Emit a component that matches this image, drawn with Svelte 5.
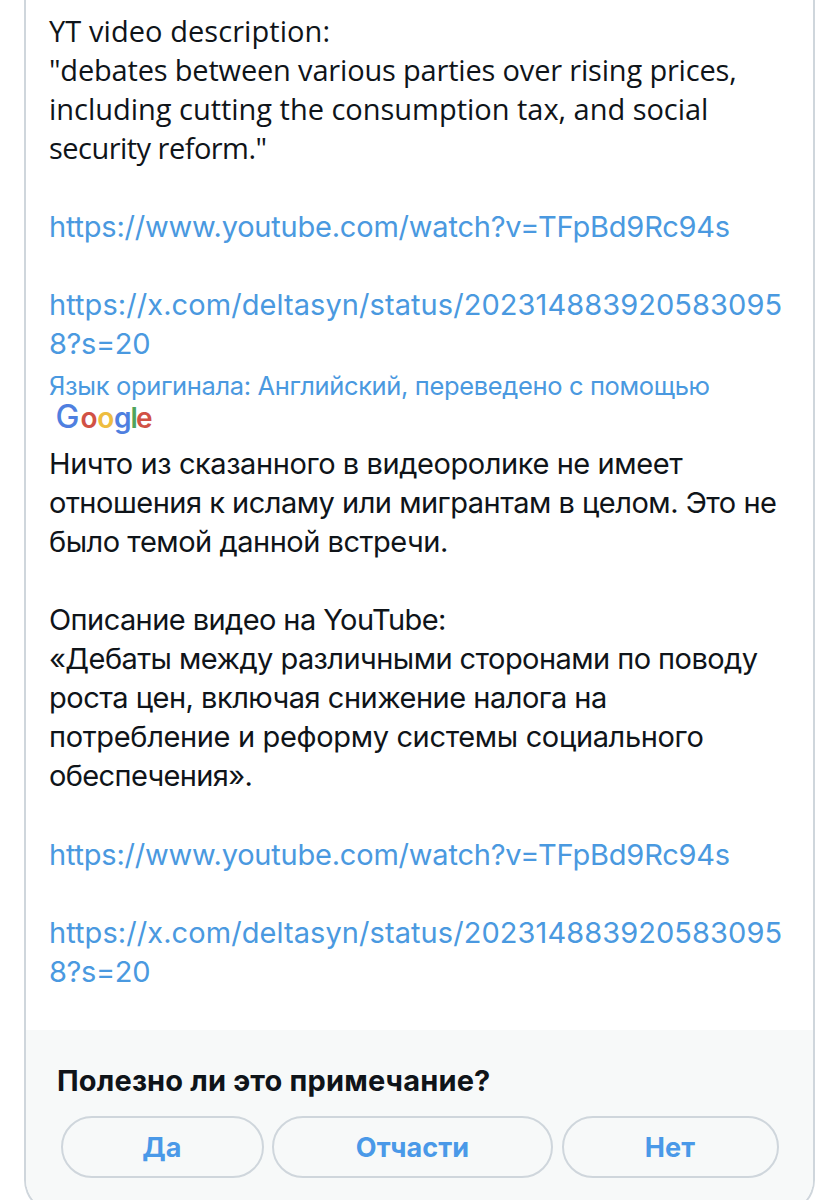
<script lang="ts">
  type Line = { text: string; spacing?: number; link?: boolean; latin?: boolean };

  const links: Line[] = [
    { text: '' },
    { text: 'https://www.youtube.com/watch?v=TFpBd9Rc94s', spacing: -0.21, link: true },
    { text: '' },
    { text: 'https://x.com/deltasyn/status/202314883920583095', spacing: 0.07, link: true },
    { text: '8?s=20', spacing: -0.35, link: true },
  ];

  const original: Line[] = [
    { text: 'YT video description:', spacing: 0.07, latin: true },
    { text: '"debates between various parties over rising prices,', spacing: -0.18, latin: true },
    { text: 'including cutting the consumption tax, and social', spacing: -0.02, latin: true },
    { text: 'security reform."', spacing: -0.53, latin: true },
    ...links,
  ];

  const translated: Line[] = [
    { text: 'Ничто из сказанного в видеоролике не имеет', spacing: -0.42 },
    { text: 'отношения к исламу или мигрантам в целом. Это не', spacing: -0.5 },
    { text: 'было темой данной встречи.', spacing: -0.48 },
    { text: '' },
    { text: 'Описание видео на YouTube:', spacing: -0.58 },
    { text: '«Дебаты между различными сторонами по поводу', spacing: -0.56 },
    { text: 'роста цен, включая снижение налога на', spacing: -0.5 },
    { text: 'потребление и реформу системы социального', spacing: -0.35 },
    { text: 'обеспечения».', spacing: -0.64 },
    ...links,
  ];

  const answers = ['Да', 'Отчасти', 'Нет'];
  let selected = $state('');
</script>

{#snippet lines(items: Line[])}
  {#each items as line}
    <div class="line">
      <span class:link={line.link} class:latin={line.latin} style="letter-spacing: {line.spacing ?? 0}px">{line.text}</span>
    </div>
  {/each}
{/snippet}

<main class="page">
  <article class="note">
    <div class="note-body">
      {@render lines(original)}

      <div class="source">
        <div>Язык оригинала: Английский, переведено с помощью</div>
        <svg class="google" width="112" height="32" viewBox="0 0 112 32" role="img" aria-label="Google">
          <text y="26">
            <tspan class="cap" x="6.5" fill="#4f7fe0">G</tspan><tspan x="31.6" fill="#d15145">o</tspan><tspan x="48.3" fill="#eebd40">o</tspan><tspan x="65" fill="#4f7fe0">g</tspan><tspan x="81.4" fill="#4fa45c">l</tspan><tspan x="87" fill="#d15145">e</tspan>
          </text>
        </svg>
      </div>

      {@render lines(translated)}
    </div>

    <footer class="rating">
      <h2>Полезно ли это примечание?</h2>
      <div class="answers">
        {#each answers as answer}
          <button aria-pressed={selected === answer} onclick={() => (selected = answer)}>{answer}</button>
        {/each}
      </div>
    </footer>
  </article>
</main>

<style>
  :global(body) {
    margin: 0;
    background: #fff;
  }

  .page {
    height: 1200px;
    overflow: hidden;
    padding: 0 24px;
    box-sizing: border-box;
    font-family: Inter, 'Noto Sans', sans-serif;
    font-weight: 380;
    color: #0f1419;
  }

  .note {
    height: 1213px;
    box-sizing: border-box;
    display: flex;
    flex-direction: column;
    border: 2px solid #cfd6dc;
    border-top: 0;
    border-radius: 0 0 33px 33px;
  }

  .note-body {
    height: 1030px;
    flex: none;
    box-sizing: border-box;
    padding: 12px 0 0 23px;
  }

  .line {
    height: 39.05px;
    font-size: 29px;
    line-height: 39px;
    white-space: nowrap;
  }

  .latin {
    font-family: 'Open Sans', sans-serif;
    font-weight: 400;
    line-height: 1;
  }

  .link,
  .source {
    color: #4a99e0;
  }

  .source {
    height: 64px;
    margin: 6.55px 0 10.1px;
    font-size: 25.5px;
    line-height: 32px;
    letter-spacing: -0.36px;
    white-space: nowrap;
  }

  .google {
    display: block;
    overflow: visible;
    font-size: 28px;
    font-weight: 600;
    letter-spacing: 0;
  }

  .cap {
    font-size: 32px;
    font-weight: 500;
  }

  .rating {
    flex: 1;
    padding: 31px 34.5px 0 31px;
    border-radius: 0 0 31px 31px;
    background: #f7f9f9;
  }

  h2 {
    margin: 0;
    font-size: 29px;
    font-weight: 700;
    line-height: 39px;
    letter-spacing: 0.16px;
  }

  .answers {
    display: grid;
    grid-template-columns: 203px 281px 217px;
    gap: 8.5px;
    margin: 16px 0 0 3.5px;
  }

  button {
    height: 62px;
    padding: 0;
    border: 2px solid #cfd6dc;
    border-radius: 31px;
    background: transparent;
    color: #4a99e8;
    font: 700 27px Inter, sans-serif;
    letter-spacing: 0.1px;
    cursor: pointer;
  }
</style>
